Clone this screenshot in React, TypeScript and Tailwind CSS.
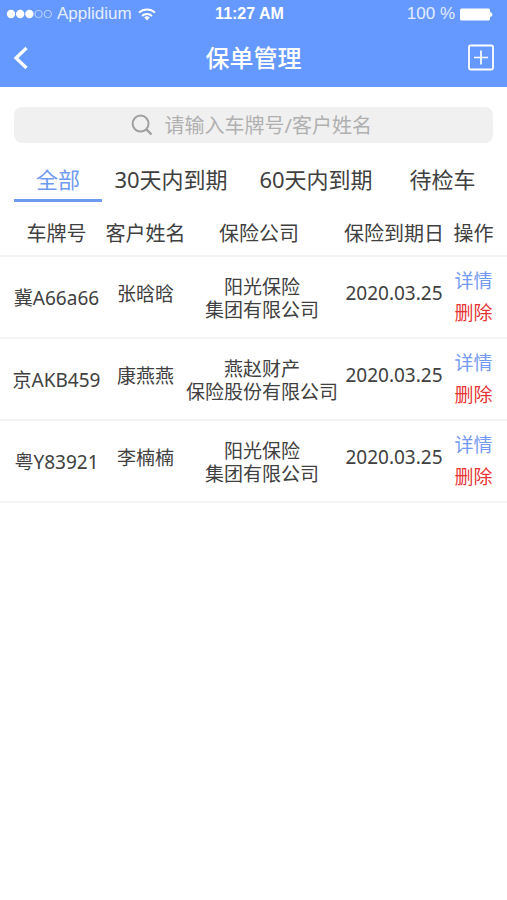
import { useState } from "react";

type Policy = {
  plate: string;
  name: string;
  company: [string, string];
  expires: string;
};

const tabs = ["全部", "30天内到期", "60天内到期", "待检车"];

const policies: Policy[] = [
  { plate: "冀A66a66", name: "张晗晗", company: ["阳光保险", "集团有限公司"], expires: "2020.03.25" },
  { plate: "京AKB459", name: "康燕燕", company: ["燕赵财产", "保险股份有限公司"], expires: "2020.03.25" },
  { plate: "粤Y83921", name: "李楠楠", company: ["阳光保险", "集团有限公司"], expires: "2020.03.25" },
];

function StatusBar() {
  return (
    <div className="grid h-7 grid-cols-[1fr_auto_1fr] items-center pr-3.5 pl-1.5 font-['Liberation_Sans',sans-serif] text-[17px] leading-5 text-[#e4edff]">
      <div className="flex items-center gap-1">
        <svg width="47" height="10" viewBox="0 0 47 10" aria-hidden="true">
          <g fill="#fff">
            <circle cx="5" cy="5" r="4.2" />
            <circle cx="14.2" cy="5" r="4.2" />
            <circle cx="23.4" cy="5" r="4.2" />
          </g>
          <g fill="none" stroke="#bfd3ff" strokeWidth="1">
            <circle cx="32.6" cy="5" r="3.7" />
            <circle cx="41.8" cy="5" r="3.7" />
          </g>
        </svg>
        <span>Applidium</span>
        <svg className="ml-0.5" width="18" height="13" viewBox="0 0 18 13" aria-hidden="true">
          <g fill="none" stroke="#fff" strokeWidth="2">
            <path d="M1 4.6a11.6 11.6 0 0 1 16 0" />
            <path d="M4 8a7.2 7.2 0 0 1 10 0" />
          </g>
          <path d="M9 12.4 6.2 9.6a4 4 0 0 1 5.6 0z" fill="#fff" />
        </svg>
      </div>
      <span className="text-base leading-5 font-bold text-white">11:27 AM</span>
      <div className="flex items-center justify-end gap-1">
        <span>100 %</span>
        <svg width="34" height="13" viewBox="0 0 34 13" aria-hidden="true">
          <rect x="1" y="0.5" width="30" height="12" rx="1.5" fill="#fff" />
          <path d="M31 4q2.4 0.5 2.4 2.5t-2.4 2.5z" fill="#fff" />
        </svg>
      </div>
    </div>
  );
}

export default function App() {
  const [active, setActive] = useState(0);

  return (
    <div className="min-h-screen bg-white font-['Noto_Sans','Noto_Sans_CJK_SC',sans-serif] text-[#404040]">
      <header className="bg-[#6699ff] text-white">
        <StatusBar />
        <div className="grid h-[59px] grid-cols-[1fr_auto_1fr] items-center px-3">
          <button type="button" aria-label="返回" className="justify-self-start">
            <svg width="18" height="24" viewBox="0 0 18 24" fill="none" stroke="#fff" strokeWidth="3.2" aria-hidden="true">
              <path d="M14.5 2 4 12l10.5 10" />
            </svg>
          </button>
          <h1 className="text-2xl font-medium">保单管理</h1>
          <button type="button" aria-label="新增保单" className="justify-self-end">
            <svg width="28" height="28" viewBox="0 0 28 28" fill="none" stroke="#fff" aria-hidden="true">
              <rect x="2" y="1.5" width="24" height="24" rx="1.5" strokeWidth="1.8" />
              <path d="M14 6.5v14M7 13.5h14" strokeWidth="1.7" />
            </svg>
          </button>
        </div>
      </header>

      <main>
        <div className="px-3.5 pt-5">
          <label className="flex h-9 items-center justify-center gap-3 rounded-lg bg-[#f0f0f0]">
            <svg width="22" height="22" viewBox="0 0 22 22" fill="none" stroke="#a0a0a0" strokeWidth="2" aria-hidden="true">
              <circle cx="9.6" cy="9.6" r="8" />
              <path d="m15.3 15.3 5.2 5.2" strokeWidth="2.4" />
            </svg>
            <input
              type="text"
              aria-label="搜索保单"
              placeholder="请输入车牌号/客户姓名"
              className="w-[212px] bg-transparent pt-0.5 text-xl text-[#404040] outline-none placeholder:text-[#b0b0b0]"
            />
          </label>
        </div>

        <nav className="grid grid-cols-[88fr_138fr_152fr_101fr] px-3.5 pt-4">
          {tabs.map((tab, i) => (
            <button
              key={tab}
              type="button"
              onClick={() => setActive(i)}
              className={
                "h-[43px] border-b-3 text-[22px] leading-8 whitespace-nowrap " +
                (i === active ? "border-[#6f9af0] text-[#6f9af0]" : "border-transparent")
              }
            >
              {tab}
            </button>
          ))}
        </nav>

        <table className="w-full table-fixed border-collapse text-center text-[19px] leading-[23px] whitespace-nowrap">
          <colgroup>
            <col />
            <col className="w-[81px]" />
            <col className="w-[152px]" />
            <col className="w-[112px]" />
            <col className="w-[57px]" />
          </colgroup>
          <thead>
            <tr className="h-[54px] border-b-2 border-[#f3f3f3] text-xl">
              <th className="pt-2.5 pl-2 font-normal">车牌号</th>
              <th className="pt-2.5 font-normal">客户姓名</th>
              <th className="pt-2.5 pr-1.5 font-normal">保险公司</th>
              <th className="pt-2.5 font-normal">保险到期日</th>
              <th className="pt-2.5 pr-2.5 font-normal">操作</th>
            </tr>
          </thead>
          <tbody>
            {policies.map((policy) => (
              <tr key={policy.plate} className="h-[82px] border-b-2 border-[#f3f3f3]">
                <td className="pt-0.5 pl-2">{policy.plate}</td>
                <td className="pb-1.5">{policy.name}</td>
                <td className="pt-1">
                  <span className="block">{policy.company[0]}</span>
                  <span className="block">{policy.company[1]}</span>
                </td>
                <td className="pb-2">{policy.expires}</td>
                <td className="pr-2.5">
                  <div className="flex flex-col items-center gap-2 leading-6">
                    <button type="button" className="text-[#7399f2]">详情</button>
                    <button type="button" className="text-[#e63434]">删除</button>
                  </div>
                </td>
              </tr>
            ))}
          </tbody>
        </table>
      </main>
    </div>
  );
}
